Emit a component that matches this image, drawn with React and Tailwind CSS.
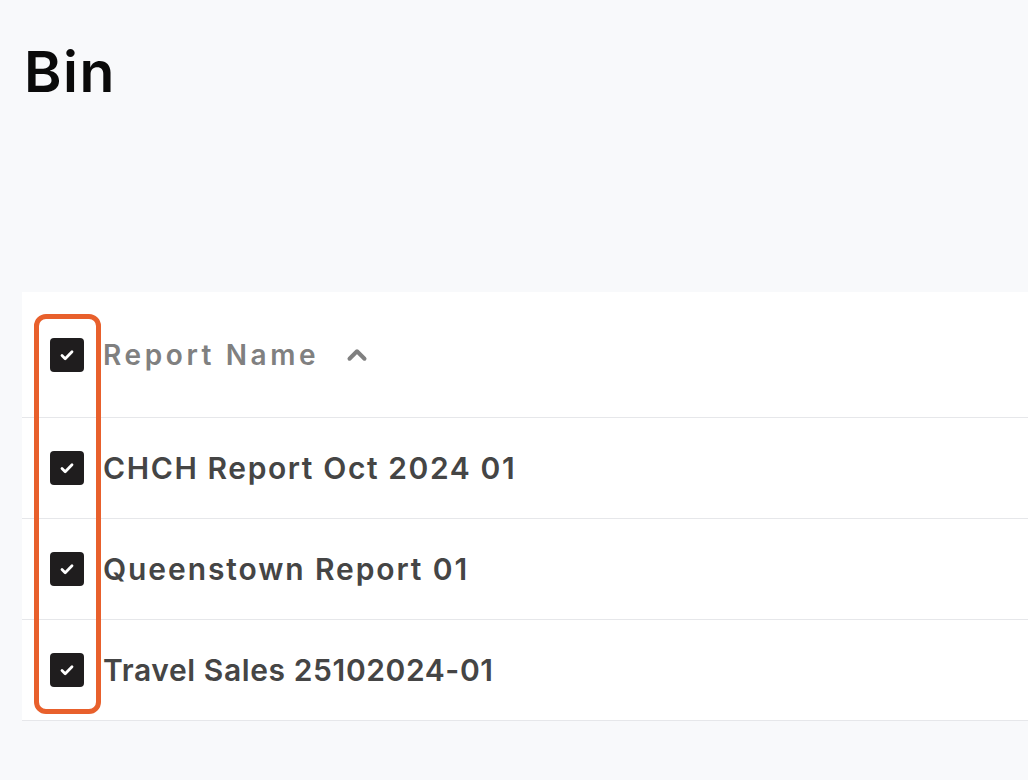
import React from 'react';

const rows = [
  { name: 'CHCH Report Oct 2024 01', track: 'tracking-[1.6px]' },
  { name: 'Queenstown Report 01', track: 'tracking-[1.9px]' },
  { name: 'Travel Sales 25102024-01', track: 'tracking-[0.6px]' },
];

const Check = () => (
  <div className="w-[34px] h-[34px] shrink-0 rounded-[4px] bg-[#1f1d1e] flex items-center justify-center">
    <svg width="24" height="24" viewBox="0 0 24 24" fill="none" stroke="white" strokeWidth="2.8" strokeLinecap="round" strokeLinejoin="round">
      <path d="M7 12.5l3.2 3.2L17 8.8" />
    </svg>
  </div>
);

export default function App() {
  return (
    <div className="min-h-[780px] bg-[#f8f9fb] pt-[38px] pl-[22px]" style={{ fontFamily: 'Inter, "Noto Sans", sans-serif' }}>
      <h1 className="pl-[2px] text-[57px] leading-[68px] font-semibold text-[#0a0a0a] tracking-[1.5px]">Bin</h1>

      <div className="relative mt-[186px] bg-white">
        {/* Header */}
        <div className="h-[126px] flex items-center gap-[19px] pl-[28px] border-b border-[#e6e7ea]">
          <Check />
          <span className="text-[28px] font-semibold text-[#808080] tracking-[3.6px]">Report Name</span>
          <svg className="ml-[4px]" width="30" height="30" viewBox="0 0 24 24" fill="none" stroke="#808080" strokeWidth="3.2" strokeLinecap="round" strokeLinejoin="round">
            <path d="M6 15l6-6 6 6" />
          </svg>
        </div>

        {rows.map((r) => (
          <div key={r.name} className="h-[101px] flex items-center gap-[19px] pl-[28px] border-b border-[#e6e7ea]">
            <Check />
            <span className={`text-[30px] font-semibold text-[#454545] ${r.track}`}>{r.name}</span>
          </div>
        ))}

        {/* Highlight */}
        <div className="absolute left-[12px] top-[22px] w-[67px] h-[400px] rounded-[12px] border-[5px] border-[#e8602c] pointer-events-none" />
      </div>
    </div>
  );
}
